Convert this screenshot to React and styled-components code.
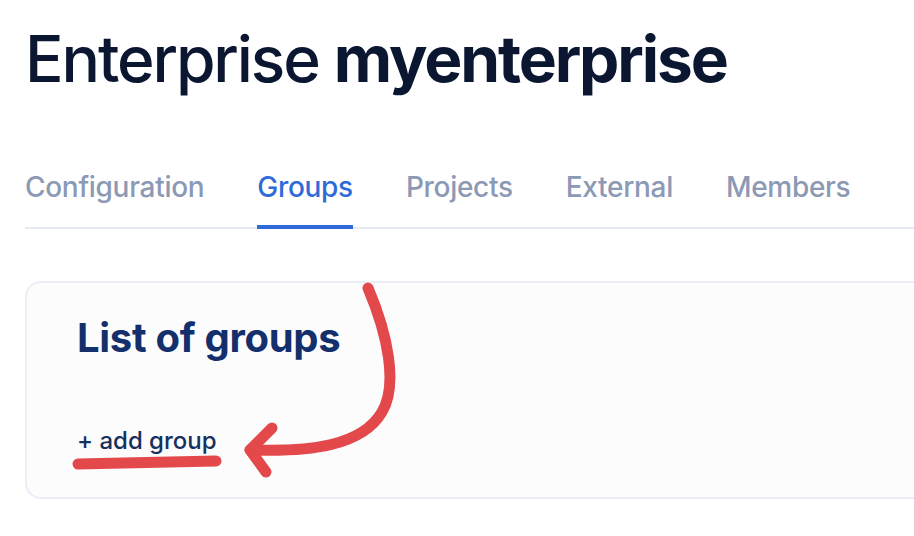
import React from 'react'
import styled, { createGlobalStyle } from 'styled-components'

const GlobalStyle = createGlobalStyle`
  body {
    margin: 0;
    background: #ffffff;
    font-family: 'Inter', 'Noto Sans', sans-serif;
    overflow: hidden;
  }
`

const Page = styled.div`
  position: relative;
  width: 1000px;
  padding: 23px 0 0 25px;
`

const Title = styled.h1`
  margin: 0;
  font-size: 64px;
  line-height: 72px;
  font-weight: 500;
  letter-spacing: -2.1px;
  color: #0b1731;

  strong {
    font-weight: 700;
  }
`

const Tabs = styled.nav`
  display: flex;
  gap: 53px;
  margin-top: 75px;
  border-bottom: 2px solid #e6ebf3;
`

const Tab = styled.div`
  font-size: 28px;
  line-height: 34px;
  letter-spacing: -0.3px;
  font-weight: 500;
  color: ${p => (p.active ? '#2f6bd8' : '#8c99b5')};
  padding-bottom: 21px;
  margin-bottom: -2px;
  border-bottom: 4px solid ${p => (p.active ? '#2f6bd8' : 'transparent')};
`

const Card = styled.section`
  margin-top: 52px;
  height: 218px;
  box-sizing: border-box;
  border: 2px solid #ebeef6;
  border-radius: 16px;
  background: #fcfcfd;
  padding: 28px 50px;
`

const CardTitle = styled.h2`
  margin: 0;
  font-size: 40px;
  line-height: 54px;
  font-weight: 700;
  letter-spacing: -0.3px;
  color: #132f6c;
`

const AddLink = styled.a`
  display: inline-block;
  margin-top: 61px;
  font-size: 24px;
  line-height: 30px;
  font-weight: 500;
  color: #16305f;
  text-decoration: none;
`

const Annotation = styled.svg`
  position: absolute;
  left: 0;
  top: 0;
  pointer-events: none;
`

const tabs = ['Configuration', 'Groups', 'Projects', 'External', 'Members']

export default function App() {
  return (
    <>
      <GlobalStyle />
      <Page>
        <Title>
          Enterprise <strong>myenterprise</strong>
        </Title>
        <Tabs>
          {tabs.map(t => (
            <Tab key={t} active={t === 'Groups'}>
              {t}
            </Tab>
          ))}
        </Tabs>
        <Card>
          <CardTitle>List of groups</CardTitle>
          <AddLink href="#">+ add group</AddLink>
        </Card>
        <Annotation width="914" height="536" viewBox="0 0 914 536">
          <g fill="none" stroke="#e3494b" strokeWidth="11" strokeLinecap="round" strokeLinejoin="round">
            <path d="M368 288 C 388 335, 398 385, 382 412 C 362 446, 310 452, 252 450" />
            <path d="M272 428 L 250 450 L 266 472" />
            <path d="M78 464 C 120 463, 170 462, 216 461" />
          </g>
        </Annotation>
      </Page>
    </>
  )
}
